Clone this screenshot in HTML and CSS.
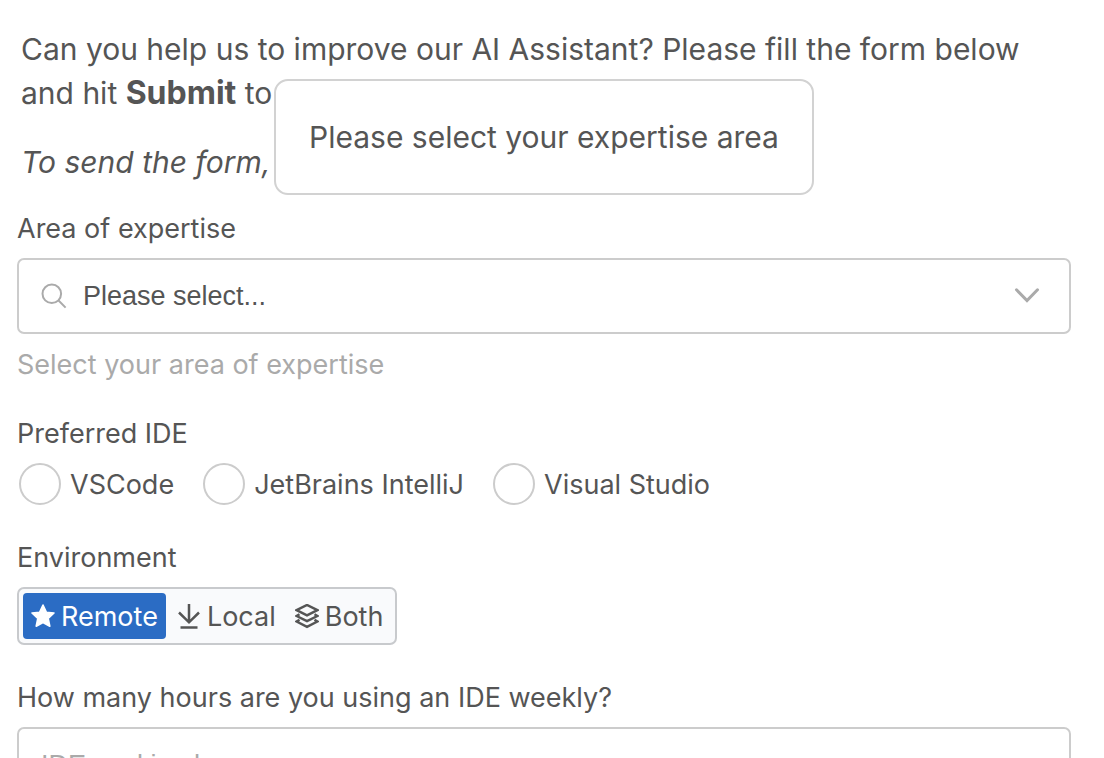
FILE: index.html
```html
<!DOCTYPE html>
<html lang="en">
<head>
<meta charset="utf-8">
<meta name="viewport" content="width=device-width, initial-scale=1">
<title>AI Assistant Survey</title>
<link rel="stylesheet" href="styles.css">
</head>
<body>
<main class="page">
  <section class="intro">
    <p>Can you help us to improve our AI Assistant? Please fill the form below and hit <strong>Submit</strong> to</p>
    <p><em>To send the form,</em></p>
    <div class="tooltip" role="tooltip" id="area-tip">Please select your expertise area</div>
  </section>
  <form class="form">
    <div class="field">
      <label class="label" for="area">Area of expertise</label>
      <div class="select-box">
        <select class="control select" id="area" aria-describedby="area-tip area-help">
          <option>Please select...</option>
        </select>
        <svg class="select-search" viewBox="0 0 26 26" aria-hidden="true"><circle cx="10.8" cy="10.8" r="9.3"/><path d="M17.3 17.3 24.6 24.6"/></svg>
        <svg class="select-arrow" viewBox="0 0 26 16" aria-hidden="true"><path d="M2.5 2.8 13 13.5 23.5 2.8"/></svg>
      </div>
      <p class="help" id="area-help">Select your area of expertise</p>
    </div>
    <fieldset class="field">
      <legend class="label">Preferred IDE</legend>
      <div class="radios">
        <label class="radio"><input type="radio" name="ide"><span>VSCode</span></label>
        <label class="radio"><input type="radio" name="ide"><span>JetBrains IntelliJ</span></label>
        <label class="radio"><input type="radio" name="ide"><span>Visual Studio</span></label>
      </div>
    </fieldset>
    <div class="field">
      <span class="label" id="env-label">Environment</span>
      <div class="segments" role="group" aria-labelledby="env-label">
        <button class="segment segment-active" type="button" aria-pressed="true">
          <svg class="icon" viewBox="0 0 24 26" aria-hidden="true"><path fill="currentColor" stroke="currentColor" stroke-width="1.6" stroke-linejoin="round" d="M12 1 15.3 8.2 23 9 17.2 14.3 18.8 22.2 12 18.5 5.2 22.2 6.8 14.3 1 9 8.7 8.2Z"/></svg>Remote</button>
        <button class="segment" type="button" aria-pressed="false">
          <svg class="icon line" viewBox="0 0 24 26" aria-hidden="true"><path d="M12 0V18M2 8.5 12 18.3 22 8.5M3.5 23.5H20.5"/></svg>Local</button>
        <button class="segment" type="button" aria-pressed="false">
          <svg class="icon line" viewBox="0 0 24 26" aria-hidden="true"><path d="M12 1 22.4 6.2 12 11.4 1.6 6.2ZM4.5 10.2 1.6 12 12 17.2 22.4 12 19.5 10.2M4.5 15.7 1.6 17.5 12 22.9 22.4 17.5 19.5 15.7"/></svg>Both</button>
      </div>
    </div>
    <div class="field">
      <label class="label" for="hours">How many hours are you using an IDE weekly?</label>
      <input class="control" id="hours" type="text" placeholder="IDE working hours">
    </div>
  </form>
</main>
</body>
</html>
```
FILE: styles.css
```css
* { box-sizing: border-box; }

body {
  margin: 0;
  height: 100vh;
  overflow: hidden;
  background: #fff;
  color: #555;
  font: 27px/36px Inter, "Liberation Sans", sans-serif;
}

.page { padding: 27px 33px 27px 17px; }

.intro {
  position: relative;
  margin-bottom: 27px;
  padding: 0 4px;
  font-size: 30px;
  line-height: 44px;
}
.intro p { margin: 0 0 25px; }
.intro p:nth-of-type(2) { margin-bottom: 0; }
.intro strong { font-size: 32px; line-height: 1; }

.tooltip {
  position: absolute;
  top: 52px;
  left: 257px;
  padding: 34px 33px;
  border: 2px solid #d2d2d2;
  border-radius: 14px;
  background: #fff;
  white-space: nowrap;
}

.form { display: flex; flex-direction: column; gap: 35px; }

.field {
  display: flex;
  flex-direction: column;
  align-items: flex-start;
  gap: 11px;
  min-width: 0;
  margin: 0;
  padding: 0;
  border: 0;
}
.label { display: block; padding: 0; }
legend.label { margin-bottom: 11px; }

.control {
  display: block;
  width: 100%;
  height: 76px;
  padding: 0 22px;
  border: 2px solid #ccc;
  border-radius: 7px;
  background: #fff;
  color: #555;
  font: 27px/36px "Liberation Sans", Arial, sans-serif;
}
.control::placeholder { color: #aaa; opacity: 1; }

.select-box { position: relative; width: 100%; }
.select {
  appearance: none;
  padding: 0 64px;
}
.select-search, .select-arrow {
  position: absolute;
  fill: none;
  stroke: #aaa;
  pointer-events: none;
}
.select-search { top: 25px; left: 24px; width: 26px; height: 26px; stroke-width: 2; }
.select-arrow { top: 29px; right: 31px; width: 26px; height: 16px; stroke-width: 3; stroke-linecap: round; }

.help { margin: 0; padding-top: 4px; line-height: 32px; color: #aaa; }

.radios { display: flex; flex-wrap: wrap; gap: 29px; padding-left: 2px; }
.radio { display: flex; align-items: center; gap: 9px; }
.radio span { padding-top: 2px; }
.radio input {
  appearance: none;
  width: 42px;
  height: 42px;
  margin: 0;
  border: 2px solid #ccc;
  border-radius: 50%;
  background: #fff;
}
.radio input:checked { border: 12px solid #2b6cc4; }

.segments {
  display: flex;
  gap: 3px;
  padding: 4px;
  border: 2px solid #c8cacd;
  border-radius: 7px;
  background: #f9fafc;
}
.segment {
  display: flex;
  align-items: center;
  gap: 6px;
  height: 46px;
  padding: 2px 8px 0;
  border: 0;
  border-radius: 4px;
  background: none;
  color: #555;
  font: inherit;
}
.segment-active { background: #2b6cc4; color: #fff; }
.icon { width: 24px; height: 26px; }
.line { fill: none; stroke: currentColor; stroke-width: 2.5; }
```
